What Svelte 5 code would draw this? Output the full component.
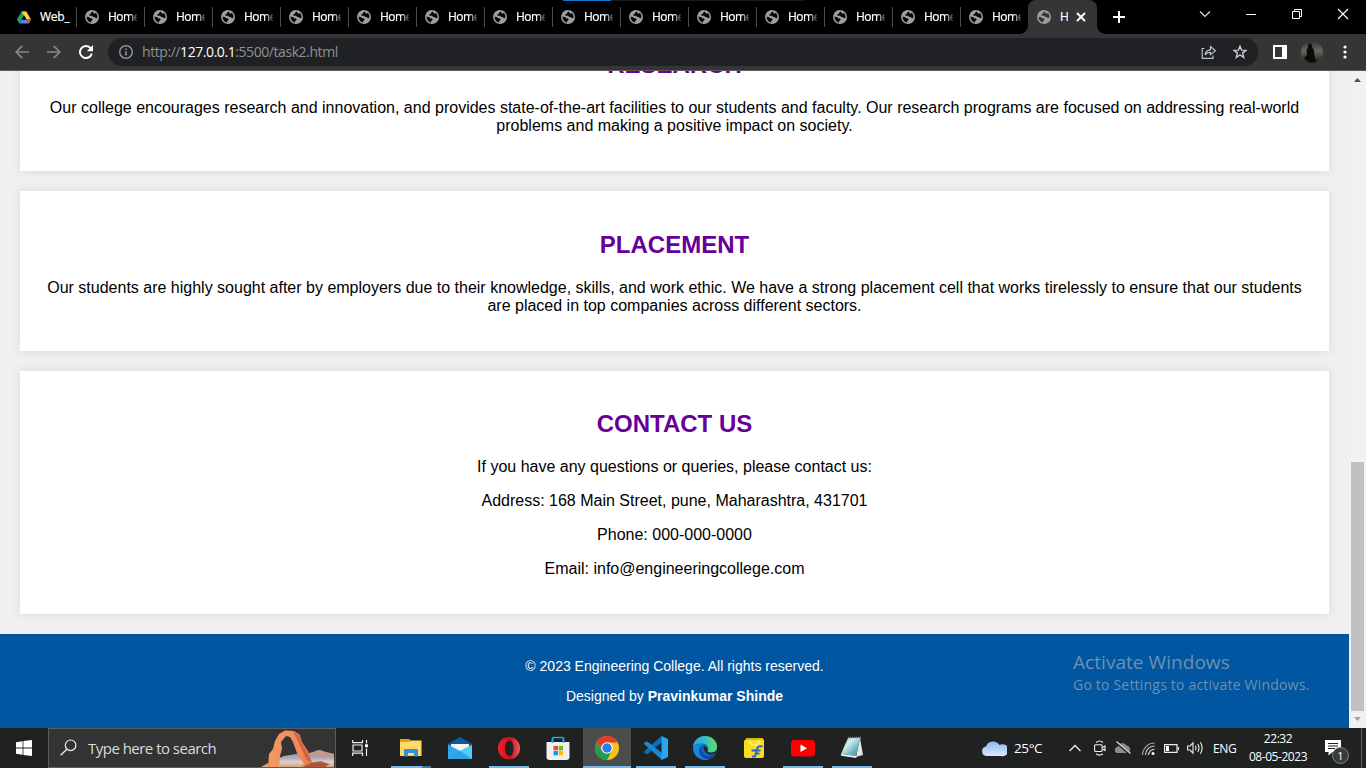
<script>
  const tabs = Array.from({ length: 14 }, (_, i) => i);
  const apps = [
    { name: 'files', line: 'split' },
    { name: 'mail', line: '' },
    { name: 'opera', line: 'on' },
    { name: 'store', line: '' },
    { name: 'chrome', line: 'active' },
    { name: 'code', line: 'on' },
    { name: 'edge', line: 'on' },
    { name: 'flipkart', line: '' },
    { name: 'youtube', line: 'on' },
    { name: 'notepad', line: 'on' }
  ];
</script>

{#snippet globe()}
  <svg class="globe" viewBox="0 0 14 14" width="14" height="14">
    <circle cx="7" cy="7" r="7" fill="#9aa0a6" />
    <path d="M8.300 1.700C6.800 1.700 6 2.300 6.200 3.200L4.600 4.300 4.500 5.700H7.100L8.200 7H9.800L10.800 8.300 12.300 8C12.900 6 12 4 11 3L9.600 3.700 8.300 3ZM1.600 6.700C1.400 9.500 3.600 12 6 12.400L6.200 10.900 7.600 9.900 7.200 8.600 5.200 8.200 4 6.900Z" fill="var(--cut, #050505)" />
  </svg>
{/snippet}

<div class="screen">
  <header class="tabstrip">
    <div class="tab first">
      <svg viewBox="0 0 14 13" width="14" height="13">
        <path d="M4.7 0.5H9.3L4.7 8.5 2.3 12.5 0 8.6Z" fill="#1fa463" />
        <path d="M4.7 0.5H9.3L14 8.6H9.4Z" fill="#ffd04b" />
        <path d="M4.6 8.6H14L11.7 12.5H2.3Z" fill="#4688f4" />
        <path d="M9.4 8.6H14L11.7 12.5Z" fill="#ea4335" />
        <path d="M7 4.5 9.4 8.6H4.6Z" fill="#000" />
      </svg>
      <span class="title">Web_</span>
    </div>
    {#each tabs as t (t)}
      <div class="tab">{@render globe()}<span class="title">Home</span></div>
    {/each}
    <div class="tab active">
      {@render globe()}<span class="title">H</span>
      <svg class="close" viewBox="0 0 10 10" width="10" height="10"><path d="M1 1 9 9M9 1 1 9" stroke="#fff" stroke-width="2" /></svg>
    </div>
    <svg class="plus" viewBox="0 0 12 12" width="12" height="12"><path d="M6 0V12M0 6H12" stroke="#fff" stroke-width="2" /></svg>
    <div class="winbtns">
      <svg viewBox="0 0 12 12" width="12" height="12"><path d="M1 3.5 6 8.5 11 3.5" fill="none" stroke="#ddd" stroke-width="1.2" /></svg>
      <svg viewBox="0 0 12 12" width="12" height="12"><path d="M1 6.5H11" stroke="#fff" /></svg>
      <svg viewBox="0 0 12 12" width="12" height="12"><path d="M1.500 3.500H8.500V10.500H1.500ZM3.500 3.500V1.500H10.500V8.500H8.500" fill="none" stroke="#fff" /></svg>
      <svg viewBox="0 0 12 12" width="12" height="12"><path d="M1 1 11 11M11 1 1 11" stroke="#fff" stroke-width="1.1" /></svg>
    </div>
    <i class="loading"></i>
  </header>

  <nav class="toolbar">
    <svg class="back" viewBox="0 0 14 14" width="14" height="14"><path d="M14 7H1.500M7.300 0.800 1.100 7 7.300 13.200" fill="none" stroke="#85878a" stroke-width="1.700" /></svg>
    <svg class="fwd" viewBox="0 0 14 14" width="14" height="14"><path d="M0 7H12.500M6.700 0.800 12.900 7 6.700 13.200" fill="none" stroke="#85878a" stroke-width="1.700" /></svg>
    <svg class="reload" viewBox="0 0 14 14" width="14" height="14"><path d="M11.600 3.200A6 6 0 1 0 12.800 8.600" fill="none" stroke="#fff" stroke-width="2" /><path d="M14 0V6.200H7.800Z" fill="#fff" /></svg>
    <div class="omnibox">
      <svg viewBox="0 0 14 14" width="14" height="14"><circle cx="7" cy="7" r="6.300" fill="none" stroke="#9aa0a6" stroke-width="1.300" /><path d="M7 6.200V10.500M7 3.400V5" stroke="#9aa0a6" stroke-width="1.500" /></svg>
      <span class="url">http://<b>127.0.0.1</b>:5500/task2.html</span>
      <svg class="share" viewBox="0 0 16 14" width="16" height="14"><path d="M3.300 3.500H1.200V13.300H12V10.500M4 10C4.400 6.700 6.500 5 9.500 4.800V1.500L14.400 5.800 9.500 9.600V7.300C7 7.300 5.300 8.200 4 10Z" fill="none" stroke="#bdc1c6" stroke-width="1.200" /></svg>
      <svg class="star" viewBox="0 0 14 14" width="14" height="14"><path d="M7 1.200 8.600 5.100 12.900 5.400 9.600 8.100 10.700 12.400 7 10 3.300 12.400 4.400 8.100 1.100 5.400 5.400 5.100Z" fill="none" stroke="#c8cacd" stroke-width="1.400" /></svg>
    </div>
    <svg class="panel" viewBox="0 0 14 14" width="14" height="14"><path d="M0 0H14V14H0ZM2 2V12H9V2Z" fill="#fff" fill-rule="evenodd" /></svg>
    <svg class="avatar" viewBox="0 0 22 22" width="22" height="22">
      <defs><linearGradient id="av" x1="0" x2="0" y1="0" y2="1"><stop offset="0" stop-color="#34342f" /><stop offset=".45" stop-color="#6a665d" /><stop offset=".7" stop-color="#47443d" /><stop offset="1" stop-color="#1b1b18" /></linearGradient></defs>
      <circle cx="11" cy="11" r="11" fill="url(#av)" />
      <path d="M7.500 3Q9 1.500 10.500 3L11 6Q14 9 13 13L15 20Q9 24 3 17L6 14 5.500 9 7 6Z" fill="#090b09" />
    </svg>
    <svg class="dots" viewBox="0 0 4 14" width="4" height="14"><g fill="#fff"><circle cx="2" cy="2" r="1.600" /><circle cx="2" cy="7" r="1.600" /><circle cx="2" cy="12" r="1.600" /></g></svg>
  </nav>

  <div class="viewport">
    <div class="page">
      <section>
        <h2>RESEARCH</h2>
        <p>Our college encourages research and innovation, and provides state-of-the-art facilities to our students and faculty. Our research programs are focused on addressing real-world problems and making a positive impact on society.</p>
      </section>
      <section>
        <h2>PLACEMENT</h2>
        <p>Our students are highly sought after by employers due to their knowledge, skills, and work ethic. We have a strong placement cell that works tirelessly to ensure that our students are placed in top companies across different sectors.</p>
      </section>
      <section class="contact">
        <h2>CONTACT US</h2>
        <p>If you have any questions or queries, please contact us:</p>
        <p>Address: 168 Main Street, pune, Maharashtra, 431701</p>
        <p>Phone: 000-000-0000</p>
        <p>Email: info@engineeringcollege.com</p>
      </section>
      <footer>
        <p>© 2023 Engineering College. All rights reserved.</p>
        <p>Designed by <b>Pravinkumar Shinde</b></p>
      </footer>
    </div>
    <div class="scrollbar">
      <svg viewBox="0 0 7 4" width="7" height="4"><path d="M0 4 3.500 0 7 4Z" fill="#505050" /></svg>
      <i class="thumb"></i>
      <svg viewBox="0 0 7 4" width="7" height="4"><path d="M0 0 3.500 4 7 0Z" fill="#a3a3a3" /></svg>
    </div>
    <div class="watermark">
      <div class="w1">Activate Windows</div>
      <div class="w2">Go to Settings to activate Windows.</div>
    </div>
  </div>

  <div class="taskbar">
    <div class="start"><svg viewBox="0 0 16 16" width="16" height="16"><path d="M0 2.200 6.600 1.200V7.500H0ZM7.400 1.100 16 0V7.500H7.400ZM0 8.400H6.600V14.800L0 13.800ZM7.400 8.400H16V16L7.400 14.900Z" fill="#fff" /></svg></div>
    <div class="search">
      <svg class="lens" viewBox="0 0 17 17" width="17" height="17"><circle cx="10.600" cy="6.300" r="5.300" fill="none" stroke="#eee" stroke-width="1.200" /><path d="M6.800 10.200 0.700 16.300" stroke="#eee" stroke-width="1.300" /></svg>
      <span>Type here to search</span>
      <svg class="arch" viewBox="0 0 76 38" width="76" height="38">
        <defs>
          <linearGradient id="rock" x1="0" x2="1"><stop offset="0" stop-color="#f09a64" /><stop offset=".5" stop-color="#f58a58" /><stop offset="1" stop-color="#c4613c" /></linearGradient>
          <linearGradient id="sand" x1="0" x2="0" y1="0" y2="1"><stop offset="0" stop-color="#8f8598" /><stop offset=".5" stop-color="#b3abc6" /><stop offset=".7" stop-color="#e3d3bd" /><stop offset="1" stop-color="#c9a582" /></linearGradient>
        </defs>
        <path d="M25 27 43 24 51 24 59 21 65 23 75 25V38H20V29Z" fill="url(#sand)" />
        <path d="M45 25 53 23.500 61 21 67 23 75 25V28L45 27Z" fill="#c19a88" />
        <path d="M2 38 9 34V38Z" fill="#d3a883" />
        <path d="M9 38 10 25 14 20 16 12 20 5 26 1.500 35 2 41 6 43 13 49 22 53 33 62 32 70 35 66 38H42L45 35 38 24 34 13 31 8 27 7 22 13 23 20 21 27 20 38Z" fill="url(#rock)" />
        <path d="M34 2 41 7 43 14 48 23 52 33 48 31 44 23 39 13Z" fill="#a64c31" opacity=".5" />
        <path d="M44 38 52 34 62 33 70 35 66 38Z" fill="#a9573a" />
      </svg>
    </div>
    <div class="taskview"><svg viewBox="0 0 16 16" width="16" height="16"><path d="M0.700 0V2.600H10.500V0M0.700 16V13.200H10.500V16M1 5H10V11H1ZM14.500 0V3.500M14.500 8.500V16" fill="none" stroke="#eee" stroke-width="1.200" /><path d="M13 4.300H16V7.200H13Z" fill="#fff" /></svg></div>
    <div class="apps">
      {#each apps as app (app.name)}
        <div class="app {app.line}">
          <svg viewBox="0 0 24 24" width="24" height="24">
            {#if app.name === 'files'}
              <path d="M1 3H10L12 5H22V20H1Z" fill="#e6a50c" /><path d="M1 6H10L12 4.500H22.500V20H1Z" fill="#ffd96a" /><path d="M5 20V14Q5 13 6 13H18Q19 13 19 14V20.500H15V17H9V20.500H5Z" fill="#3b8fd9" />
            {:else if app.name === 'mail'}
              <path d="M0 8 12 1 24 8V12H0Z" fill="#0b5aa5" /><path d="M3 8H21V15H3Z" fill="#f5f5f5" /><path d="M0 8.500 12 15 24 9V23H0Z" fill="#2fa9ea" /><path d="M12 15 24 9V23H23Z" fill="#55cdf8" /><path d="M0 23 12 15 24 23Z" fill="#2aa3ea" />
            {:else if app.name === 'opera'}
              <defs><linearGradient id="op"><stop offset="0" stop-color="#ff1b2d" /><stop offset=".55" stop-color="#c4101f" /><stop offset="1" stop-color="#f25a5c" /></linearGradient></defs>
              <path d="M12 1A11 11.300 0 1 0 12 23.600A11 11.300 0 1 0 12 1ZM12.500 4.500C15 4.500 16.500 8 16.500 12.300S15 20 12.500 20 8 16.600 8 12.300 10 4.500 12.500 4.500Z" fill="url(#op)" fill-rule="evenodd" />
            {:else if app.name === 'store'}
              <path d="M6.500 8V2.200Q6.500 1.500 7.500 1.500H16.500Q17.500 1.500 17.500 2.200V8" fill="none" stroke="#27a5dd" stroke-width="1.700" /><path d="M.5 6H23.500V21Q23.500 24 20.500 24H3.500Q.5 24 .5 21Z" fill="#f0f0f0" /><path d="M6.500 3V7M17.500 3V7" stroke="#27a5dd" stroke-width="1.500" /><path d="M7.500 10H12V14.300H7.500Z" fill="#f25022" /><path d="M12.800 10H17V14.300H12.800Z" fill="#7fba00" /><path d="M7.500 15H12V19.300H7.500Z" fill="#00a4ef" /><path d="M12.800 15H17V19.300H12.800Z" fill="#ffb900" />
            {:else if app.name === 'chrome'}
              <circle cx="12" cy="12" r="12" fill="#fbc116" /><path d="M12 6.500H22.700A12 12 0 0 0 1.600 6L7 14Z" fill="#e33b2e" /><path d="M1.600 6A12 12 0 0 0 12 24L17 14.500 12 12 7 14.500Z" fill="#229d4b" /><circle cx="12" cy="12" r="5.800" fill="#fff" /><circle cx="12" cy="12" r="4.700" fill="#287de8" />
            {:else if app.name === 'code'}
              <path d="M17.500 0V6.500L3 18.500 0 16.500V15.500Z" fill="#0a70b8" /><path d="M0 8V7L3 5.200 18 17V24Z" fill="#1589d1" /><path d="M17.500 0 24 3V21L17.500 24Z" fill="#27a7f2" />
            {:else if app.name === 'edge'}
              <defs><linearGradient id="eg" x1="0" x2="1"><stop offset="0" stop-color="#2ca8df" /><stop offset=".5" stop-color="#31bfc8" /><stop offset="1" stop-color="#62e05a" /></linearGradient></defs>
              <circle cx="12" cy="12" r="12" fill="#1168c0" /><path d="M0 11C.5 4 6 0 12 0C19 0 24 5 24 10.500C24 15 20 17 16.500 16.500C14 16 14 15 15 14C16 11 14 8 9 7.500C4.500 7 1 8.500 0 11Z" fill="url(#eg)" /><path d="M0 11C3 7 8 7 11 9C8 10 7 14 9 18C11 22 16 23 18 22.300C12 26 0 23 0 11Z" fill="#1687dd" /><path d="M11 9C8 11 8 15 10 18C13 21.500 19 20.500 22.500 18C22 20 19 22.500 17 23C10 24 5 19 6.500 13C7 11 9 9 11 9Z" fill="#1049a0" /><path d="M11.500 9.500C9.500 11.500 10.500 16 15 18C18 19.500 21 18 23.500 17L22 19.500 25 20V16L22.500 15.500C20 17 17 17 15 16C14 15 15 14 15 13Z" fill="#242525" />
            {:else if app.name === 'flipkart'}
              <path d="M3 4 5 2H20L22 4V20Q22 22 20 22H4Q2 22 2 20V5Z" fill="#f8dc20" /><path d="M4 2H21L20 4H5Z" fill="#d8b912" /><path d="M8 4Q8 9 12.500 9Q17 9 17 4" fill="none" stroke="#fff09a" stroke-width="1.300" /><path d="M20.500 10.500Q15.500 9.500 15 13L13 20.500H10M9.500 14.500H18.500M14 17.500H17.500" fill="none" stroke="#2468ce" stroke-width="2" />
            {:else if app.name === 'youtube'}
              <rect x="0" y="4" width="24" height="16.500" rx="3.500" fill="#f00" /><path d="M9.500 8.500 16 12.200 9.500 16Z" fill="#fff" />
            {:else}
              <defs><linearGradient id="np" x1="0" y1="0" x2="1" y2="1"><stop offset="0" stop-color="#8fa9ad" /><stop offset=".35" stop-color="#d6edf0" /><stop offset=".7" stop-color="#67b0bd" /><stop offset="1" stop-color="#3f98a8" /></linearGradient></defs>
              <path d="M20 2 23 19 16 21Z" fill="#e4e4e0" /><path d="M8 2 20.500 1.500 16 20 1 18Z" fill="url(#np)" /><path d="M1 18 16 20 16.500 22 1 19.800Z" fill="#eef3f3" /><path d="M8 1.500H21" stroke="#777" stroke-width="1.500" stroke-dasharray="1 1" />
            {/if}
          </svg>
        </div>
      {/each}
    </div>
    <div class="tray">
      <svg class="cloud" viewBox="0 0 25 17" width="25" height="17">
        <defs><linearGradient id="cl" x1="0" x2="0" y1="0" y2="1"><stop offset="0" stop-color="#8db7f2" /><stop offset="1" stop-color="#dbe8fc" /></linearGradient></defs>
        <path d="M5 16A4.800 4.800 0 0 1 4 6.500A7.500 7.500 0 0 1 17.500 5A6 6 0 1 1 19 16Z" fill="url(#cl)" />
      </svg>
      <span class="temp">25°C</span>
      <svg class="t1" viewBox="0 0 12 8" width="12" height="8"><path d="M0.500 7 6 1.500 11.500 7" fill="none" stroke="#eee" stroke-width="1.300" /></svg>
      <svg class="t2" viewBox="0 0 12 16" width="12" height="16"><g fill="none" stroke="#eee" stroke-width="1.100"><rect x=".6" y="4.700" width="7.500" height="6.800" rx="1" /><path d="M8.500 7.500 11 6V10.500L8.500 9M2 2.500Q5.500-.5 9 2.500M2 13.800Q5.500 16.500 9 13.800" /></g></svg>
      <svg class="t3" viewBox="0 0 16 14" width="16" height="14"><path d="M3 12A3 3 0 0 1 2.500 6A5 5 0 0 1 11.500 4.500A4 4 0 0 1 13 12Z" fill="#8b8b8b" /><path d="M1 1 15.500 13.500" stroke="#222" stroke-width="2.500" /><path d="M1.500 .5 15.500 12.500" stroke="#ddd" stroke-width="1.200" /></svg>
      <svg class="t4" viewBox="0 0 13 13" width="13" height="13"><g fill="none" stroke="#ddd" stroke-width="1.100"><path d="M.6 13A12 12 0 0 1 12.500 1" stroke="#aaa" /><path d="M3.500 13A9 9 0 0 1 12.500 4M6.500 13A6 6 0 0 1 12.500 7.200" /></g><circle cx="11" cy="11.500" r="1.500" fill="#fff" /></svg>
      <svg class="t5" viewBox="0 0 15 9" width="15" height="9"><path d="M.6 .6H13V8.400H.6ZM14.500 3V6" fill="none" stroke="#eee" stroke-width="1.200" /><path d="M2 2H5V7H2Z" fill="#fff" /></svg>
      <svg class="t6" viewBox="0 0 17 14" width="17" height="14"><g fill="none" stroke="#eee" stroke-width="1.100"><path d="M.6 5H3L6 1.800V12.200L3 9H.6ZM8.300 4.800Q9.800 7 8.300 9.200M10.700 3Q13.300 7 10.700 11M13.300 1.200Q17 7 13.300 12.800" /></g></svg>
      <span class="lang">ENG</span>
      <div class="clock"><span>22:32</span><span class="date">08-05-2023</span></div>
      <div class="notif">
        <svg viewBox="0 0 16 16" width="16" height="16"><path d="M0 0H16V12H7.500L3.500 15.500V12H0Z" fill="#fff" /><path d="M3 3.500H13M3 6H13M3 8.500H10" stroke="#222" /></svg>
        <span class="badge">1</span>
      </div>
      <i class="peek"></i>
    </div>
  </div>
</div>

<style>
  :global(body) { margin: 0; overflow: hidden; background: #000; }
  .screen { width: 1366px; height: 768px; display: flex; flex-direction: column; overflow: hidden; font-family: 'Open Sans', 'Noto Sans', sans-serif; }
  svg { display: block; flex: none; }

  .tabstrip { height: 34px; flex: none; background: #000; display: flex; align-items: center; position: relative; }
  .tab { width: 68px; height: 34px; box-sizing: border-box; padding-left: 8px; display: flex; align-items: center; flex: none; position: relative; color: #fff; font-size: 12px; }
  .tab::after { content: ''; position: absolute; right: -1px; top: 7px; width: 1px; height: 20px; background: #4c4c4c; }
  .tab.first { width: 76px; padding-left: 17px; }
  .tab:nth-child(15)::after { display: none; }
  .globe { margin-left: 1px; }
  .title { margin-left: 9px; width: 29px; overflow: hidden; white-space: nowrap; letter-spacing: -.5px; line-height: 18px; -webkit-text-stroke: .2px #fff; mask-image: linear-gradient(90deg, #000 72%, transparent 108%); }
  .first .title { width: 30px; mask-image: none; letter-spacing: -.25px; }
  .tab.active { width: 69px; background: #353535; border-radius: 8px 8px 0 0; --cut: #353535; }
  .active .title { width: 8px; mask-image: none; }
  .tab.active::before, .tab.active::after { content: ''; position: absolute; display: block; bottom: 0; top: auto; width: 8px; height: 8px; }
  .tab.active::before { left: -8px; background: radial-gradient(circle at 0 0, transparent 7.5px, #353535 8px); }
  .tab.active::after { right: -8px; background: radial-gradient(circle at 100% 0, transparent 7.5px, #353535 8px); }
  .close { margin-left: 8px; }
  .plus { margin-left: 16px; }
  .winbtns { margin: -6px 17px 0 auto; display: flex; gap: 34px; }
  .loading { position: absolute; left: 563px; top: 0; width: 241px; height: 1px; background: linear-gradient(90deg, #0877d6 48px, #1b1b1b 48px); }

  .toolbar { height: 37px; flex: none; box-sizing: border-box; background: #353535; border-bottom: 1px solid #5b5b5b; display: flex; align-items: center; padding-left: 15px; }
  .fwd { margin-left: 18px; }
  .reload { margin-left: 18px; }
  .omnibox { width: 1150px; height: 28px; margin-left: 15px; box-sizing: border-box; border-radius: 14px; background: #202124; display: flex; align-items: center; padding: 0 11px; }
  .url { margin-left: 9px; font-size: 14px; letter-spacing: -.43px; color: #8d9196; line-height: 20px; white-space: nowrap; }
  .url b { font-weight: 400; color: #fff; }
  .share { margin-left: auto; }
  .star { margin-left: 16px; }
  .panel { margin-left: 15px; }
  .avatar { margin-left: 14px; }
  .dots { margin-left: 20px; }

  .viewport { height: 657px; flex: none; display: flex; position: relative; overflow: hidden; background: #f0f0f0; }
  .page { width: 1349px; flex: none; margin-top: -60px; font: 16px/18px 'Liberation Sans', Arial, sans-serif; color: #000; text-align: center; }
  section { height: 160px; margin: 0 20px 20px; padding: 20px; box-sizing: border-box; background: #fff; box-shadow: 0 0 10px rgba(0, 0, 0, .1); overflow: hidden; }
  section.contact { height: 243px; }
  h2 { margin: 20px 0 21px; font-size: 24px; line-height: 27px; color: #609; }
  .contact h2 { margin: 19px 0 21px; }
  p { margin: 16px 0; }
  h2 + p { margin-top: 0; }
  footer { height: 94px; box-sizing: border-box; padding: 10px; background: #0056a0; color: #fff; font-size: 14px; line-height: 16px; overflow: hidden; }
  footer p { margin: 14px 0; }

  .scrollbar { width: 17px; height: 657px; box-sizing: border-box; background: #f1f1f1; display: flex; flex-direction: column; align-items: center; padding: 7px 0 7px; }
  .thumb { width: 13px; height: 249px; margin: auto 0 6px; background: #c1c1c1; }
  .watermark { position: absolute; left: 1073px; top: 579px; color: rgba(180, 180, 180, .63); white-space: nowrap; }
  .w1 { font-size: 19px; line-height: 24px; letter-spacing: .05px; }
  .w2 { font-size: 14px; line-height: 21px; letter-spacing: .2px; }

  .taskbar { height: 40px; flex: none; background: #202121; display: flex; color: #fff; }
  .start { width: 48px; display: flex; align-items: center; justify-content: center; }
  .search { width: 288px; height: 40px; box-sizing: border-box; border: 1px solid #5c5c5c; background: #333; display: flex; align-items: center; padding-left: 11px; overflow: hidden; color: #dcdcdc; font-size: 15px; }
  .search span { margin-left: 11px; letter-spacing: -.52px; white-space: nowrap; }
  .lens { margin-top: -2px; }
  .arch { margin-left: auto; align-self: flex-end; }
  .taskview { width: 48px; display: flex; align-items: center; justify-content: center; }
  .apps { margin-left: 3px; display: flex; gap: 1px; }
  .app { width: 48px; height: 40px; display: flex; align-items: center; justify-content: center; position: relative; }
  .app::after { content: ''; position: absolute; left: 4px; bottom: 0; width: 40px; height: 2px; }
  .on::after { background: #76b9ed; }
  .split::after { background: linear-gradient(90deg, #76b9ed 31px, #4b7798 31px); }
  .active.app { background: #4b4c4c; }
  .active.app::after { left: 0; width: 48px; background: #76b9ed; }
  .tray { margin-left: auto; display: flex; align-items: center; height: 40px; width: 384px; font-size: 12px; }
  .temp { margin-left: 7px; width: 30px; font-size: 13.5px; letter-spacing: -.4px; }
  .t1 { margin-left: 25px; }
  .t2 { margin-left: 13px; }
  .t3 { margin-left: 9px; }
  .t4 { margin-left: 11px; }
  .t5 { margin-left: 9px; }
  .t6 { margin-left: 8px; }
  .lang { margin-left: 9px; width: 24px; letter-spacing: -.4px; }
  .clock { margin-left: 9px; width: 64px; height: 36px; display: flex; flex-direction: column; align-items: center; line-height: 18px; letter-spacing: -.45px; }
  .notif { margin-left: 15px; position: relative; }
  .badge { position: absolute; left: 7px; top: 7px; width: 15px; height: 15px; border: 1px solid #858585; border-radius: 50%; background: #3a3a3a; font-size: 11px; line-height: 15px; text-align: center; }
  .peek { width: 1px; height: 40px; margin-left: 20px; background: #666; }
</style>
